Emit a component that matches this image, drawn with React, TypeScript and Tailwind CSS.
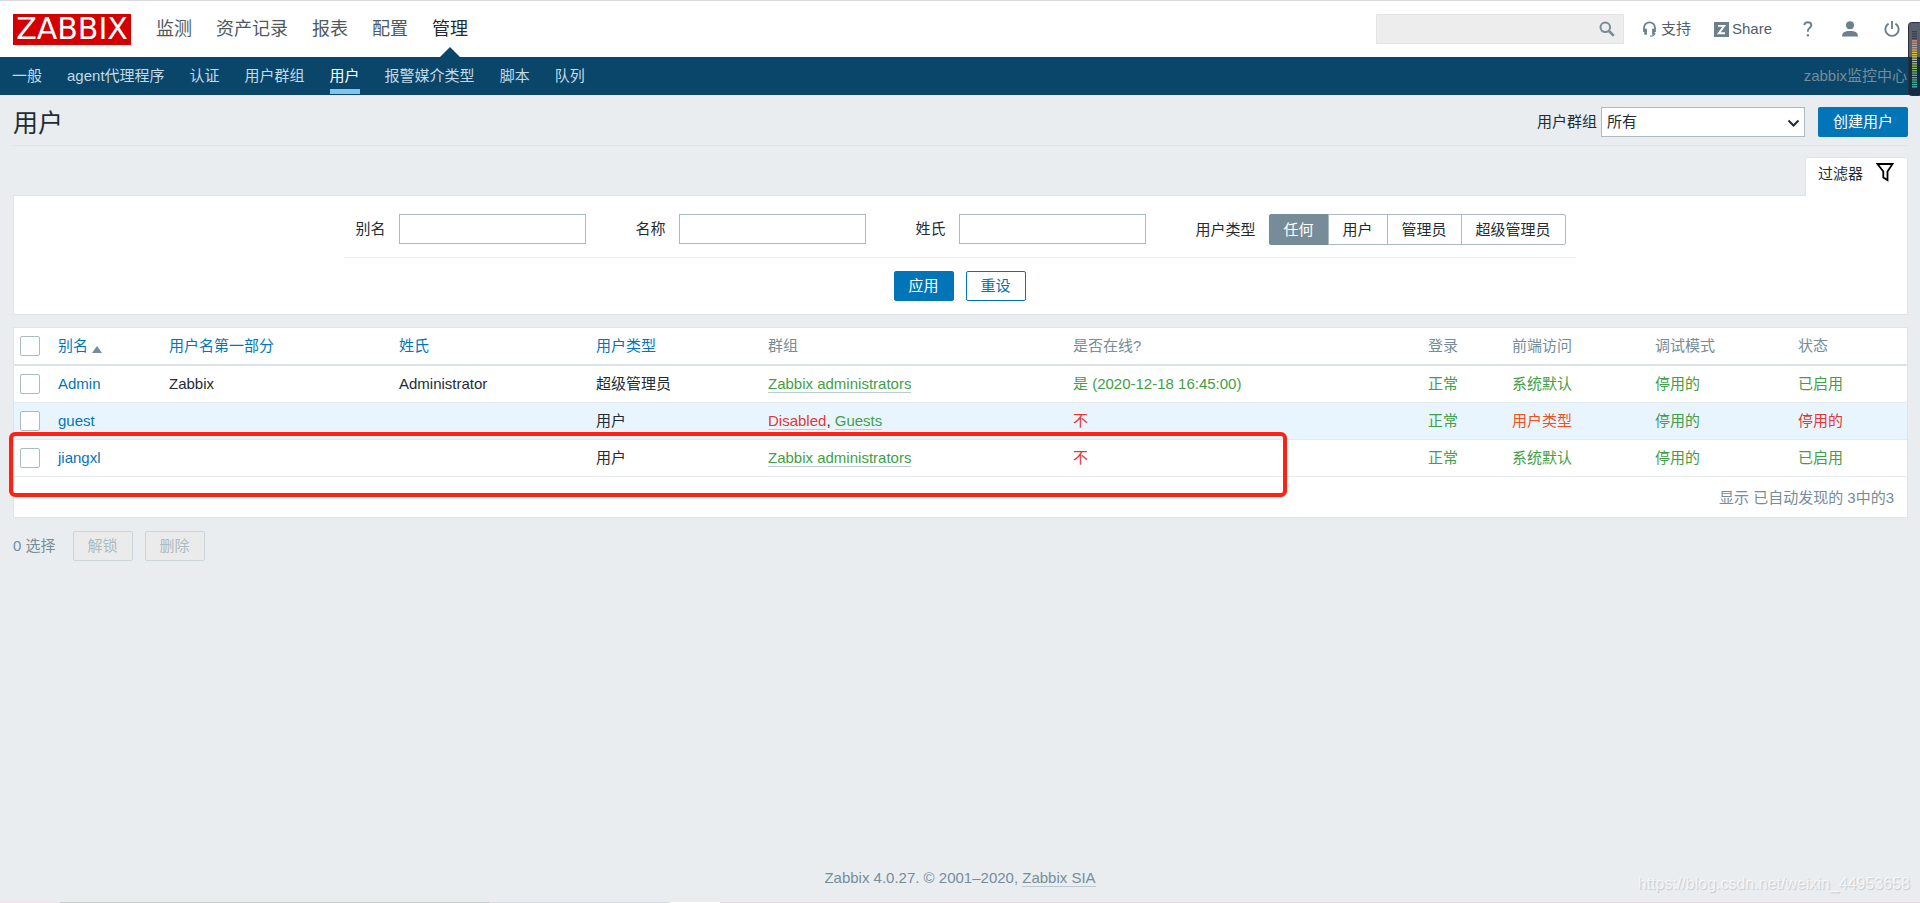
import React, { useState } from 'react';

const MENU = ['监测', '资产记录', '报表', '配置', '管理'];
const SUBMENU = ['一般', 'agent代理程序', '认证', '用户群组', '用户', '报警媒介类型', '脚本', '队列'];
const USER_TYPES = ['任何', '用户', '管理员', '超级管理员'];

const GREEN = 'text-[#429e47]';
const RED = 'text-[#e33734]';
const ORANGE = 'text-[#f24f1d]';

interface Group {
  name: string;
  color: string;
}

interface User {
  alias: string;
  name: string;
  surname: string;
  type: string;
  groups: Group[];
  online: string;
  onlineColor: string;
  access: string;
  accessColor: string;
  status: string;
  statusColor: string;
}

const USERS: User[] = [
  {
    alias: 'Admin',
    name: 'Zabbix',
    surname: 'Administrator',
    type: '超级管理员',
    groups: [{ name: 'Zabbix administrators', color: GREEN }],
    online: '是 (2020-12-18 16:45:00)',
    onlineColor: GREEN,
    access: '系统默认',
    accessColor: GREEN,
    status: '已启用',
    statusColor: GREEN,
  },
  {
    alias: 'guest',
    name: '',
    surname: '',
    type: '用户',
    groups: [
      { name: 'Disabled', color: RED },
      { name: 'Guests', color: GREEN },
    ],
    online: '不',
    onlineColor: RED,
    access: '用户类型',
    accessColor: ORANGE,
    status: '停用的',
    statusColor: RED,
  },
  {
    alias: 'jiangxl',
    name: '',
    surname: '',
    type: '用户',
    groups: [{ name: 'Zabbix administrators', color: GREEN }],
    online: '不',
    onlineColor: RED,
    access: '系统默认',
    accessColor: GREEN,
    status: '已启用',
    statusColor: GREEN,
  },
];

const METER_COLORS = [
  '#3a3f50', '#3a3f50', '#3a3f50', '#3a3f50', '#e0906a', '#e0906a', '#e39a5c', '#e2a552', '#e0b04c', '#dcba48',
  '#dcc546', '#dccf45', '#d8d846', '#c6d14a', '#b4ca50', '#a3c456', '#93bf5c', '#84bb64', '#76b86c', '#69b676',
  '#5db682', '#52b88f', '#47ba9c', '#3fbda8', '#3cc4b2',
];

const CHECKBOX =
  'block h-5 w-5 cursor-pointer appearance-none rounded-xs border border-[#acbbc2] bg-white checked:bg-[#0275b8]';

function TopBar() {
  return (
    <header className="flex h-[57px] items-center border-t border-[#d9d9de] bg-white pr-5 pl-[13px]">
      <a
        href="#"
        className="flex h-[31px] w-[118px] items-center justify-center bg-[#d40000] font-['DejaVu_Sans',sans-serif] text-[30px] leading-none text-white"
      >
        ZABBIX
      </a>
      <nav className="ml-[25px] flex h-full gap-6 text-[18px]">
        {MENU.map((item) => (
          <a
            key={item}
            href="#"
            className={
              item === '管理'
                ? 'relative flex items-center text-[#1f2c33]'
                : 'flex items-center text-[#4e5a61]'
            }
          >
            {item}
            {item === '管理' && (
              <svg className="absolute bottom-0 left-2" width="20" height="10" viewBox="0 0 20 10">
                <path d="M0 10 10 0l10 10z" fill="#0a466a" />
              </svg>
            )}
          </a>
        ))}
      </nav>

      <div className="ml-auto flex items-center text-[#50616a]">
        <form className="flex h-[30px] w-[248px] items-center border border-[#e2e4e6] bg-[#ededed]">
          <input type="text" aria-label="搜索" className="min-w-0 flex-1 px-2 outline-none" />
          <button type="button" aria-label="搜索" className="mr-2">
            <svg width="16" height="16" viewBox="0 0 16 16" fill="none" stroke="#768d99">
              <circle cx="6.3" cy="6.3" r="4.8" strokeWidth="2" />
              <path d="m10 10 4.8 4.8" strokeWidth="2.6" />
            </svg>
          </button>
        </form>
        <a href="#" className="ml-[18px] flex items-center gap-1">
          <svg width="15" height="16" viewBox="0 0 15 16" fill="none" stroke="#6b808b">
            <path d="M2 11V6.8a5.500 5.500 0 0 1 11 0V11" strokeWidth="1.8" />
            <path d="M3.600 7.800v6M11.400 7.800v6" strokeWidth="2.6" />
            <path d="M13 12c-.3 2-1.800 3.200-4.800 3.200" strokeWidth="1.2" />
          </svg>
          支持
        </a>
        <a href="#" className="ml-[23px] flex items-center gap-[3px]">
          <svg width="15" height="15" viewBox="0 0 15 15">
            <rect width="15" height="15" fill="#6b808b" />
            <path d="M4 3.900h6.200L4.800 11.200h6.200" fill="none" stroke="#fff" strokeWidth="1.900" />
          </svg>
          Share
        </a>
        <a href="#" aria-label="帮助" className="ml-[31px]">
          <svg width="10" height="16" viewBox="0 0 10 16" fill="none" stroke="#6b808b">
            <path d="M1.300 4.200C1.500 2.200 2.900 1.200 4.800 1.200c2 0 3.500 1.100 3.500 3 0 2.700-3.400 3-3.400 5.500v1.100" strokeWidth="1.900" />
            <path d="M4.900 13.200v2.200" strokeWidth="2.200" />
          </svg>
        </a>
        <a href="#" aria-label="用户资料" className="ml-7">
          <svg width="18" height="16" viewBox="0 0 18 16" fill="#6b808b">
            <circle cx="9" cy="4.200" r="4" />
            <path d="M1 15.500c0-4 2.500-5.600 8-5.600s8 1.600 8 5.600z" />
          </svg>
        </a>
        <a href="#" aria-label="登出" className="ml-[25px]">
          <svg width="16" height="16" viewBox="0 0 16 16" fill="none" stroke="#6b808b" strokeWidth="1.900">
            <path d="M8 0v8" />
            <path d="M4.600 2.600a6.600 6.600 0 1 0 6.800 0" />
          </svg>
        </a>
      </div>
    </header>
  );
}

function SubNav() {
  return (
    <nav className="flex h-[38px] gap-[25px] bg-[#0a466a] pr-[13px] pl-3 text-[#c3dbe8]">
      {SUBMENU.map((item) => (
        <a
          key={item}
          href="#"
          className={
            item === '用户'
              ? 'relative flex items-center text-white after:absolute after:inset-x-0 after:bottom-px after:h-[5px] after:bg-[#7fc4f2]'
              : 'flex items-center'
          }
        >
          {item}
        </a>
      ))}
      <span className="ml-auto flex items-center text-[#768d99]">zabbix监控中心</span>
    </nav>
  );
}

function LevelMeter() {
  return (
    <svg className="absolute top-[22px] right-0" width="12" height="74" viewBox="0 0 12 74">
      <rect x="0.500" y="0.500" width="14" height="73" rx="3" fill="#1b2136" fillOpacity="0.720" stroke="#2b2f3d" />
      {METER_COLORS.map((color, i) => (
        <rect key={i} x="4" y={9 + i * 2.3} width="5" height="1.300" fill={color} />
      ))}
    </svg>
  );
}

function Filter() {
  const [userType, setUserType] = useState('任何');

  return (
    <section>
      <div className="flex justify-end">
        <button
          type="button"
          className="relative -mb-px flex h-[39px] w-[103px] gap-[13px] rounded-t-xs border border-b-0 border-[#dfe4e7] bg-white pt-[5px] pl-3"
        >
          <span className="leading-[22px]">过滤器</span>
          <svg width="18" height="19" viewBox="0 0 18 19" fill="none" stroke="#000" strokeWidth="1.800">
            <path d="M1.500 1h15l-5 7.500v8.600l-4.200-2.600v-6z" />
          </svg>
        </button>
      </div>
      <form className="border border-[#dfe4e7] bg-white pt-[18px] pr-[18px] pb-[13px] pl-4">
        <div className="mx-auto max-w-[1232px]">
          <div className="flex flex-wrap gap-x-[50px] gap-y-3 border-b border-[#ebeef0] pb-3 pl-3">
            {['别名', '名称', '姓氏'].map((label) => (
              <label key={label} className="flex items-start gap-[13px] leading-[30px]">
                {label}
                <input type="text" className="h-[30px] w-[187px] border border-[#acbbc2] px-1 outline-none" />
              </label>
            ))}
            <fieldset className="flex items-center gap-[13px]">
              <span>用户类型</span>
              <div className="flex">
                {USER_TYPES.map((type) => (
                  <label
                    key={type}
                    className="-ml-px flex h-[31px] cursor-pointer items-center border border-[#acbbc2] px-[14px] first:ml-0 first:rounded-l-xs last:rounded-r-xs has-checked:border-[#768d99] has-checked:bg-[#768d99] has-checked:text-white"
                  >
                    <input
                      type="radio"
                      name="user-type"
                      className="sr-only"
                      checked={userType === type}
                      onChange={() => setUserType(type)}
                    />
                    {type}
                  </label>
                ))}
              </div>
            </fieldset>
          </div>
          <div className="flex justify-center gap-3 pt-[13px]">
            <button type="button" className="h-[30px] w-[60px] rounded-xs border border-[#0275b8] bg-[#0275b8] text-white">
              应用
            </button>
            <button type="button" className="h-[30px] w-[60px] rounded-xs border border-[#0275b8] bg-white text-[#0275b8]">
              重设
            </button>
          </div>
        </div>
      </form>
    </section>
  );
}

function UserTable() {
  return (
    <div className="relative mt-3 border border-[#dfe4e7] bg-white">
      <table className="w-full table-fixed border-collapse text-left">
        <thead>
          <tr className="h-[37px] border-b-2 border-[#dce2e5] text-[#768d99] [&>th]:px-[6px] [&>th]:py-0 [&>th]:font-normal">
            <th className="w-[38px]">
              <input type="checkbox" aria-label="全选" className={CHECKBOX} />
            </th>
            <th className="w-[111px]">
              <a href="#" className="flex items-end gap-1 text-[#0275b8]">
                别名
                <svg width="10" height="10" viewBox="0 0 10 10">
                  <path d="M0 8 5 1l5 7z" fill="#768d99" />
                </svg>
              </a>
            </th>
            <th className="w-[230px]">
              <a href="#" className="text-[#0275b8]">用户名第一部分</a>
            </th>
            <th className="w-[197px]">
              <a href="#" className="text-[#0275b8]">姓氏</a>
            </th>
            <th className="w-[172px]">
              <a href="#" className="text-[#0275b8]">用户类型</a>
            </th>
            <th className="w-[305px]">群组</th>
            <th className="w-[355px]">是否在线?</th>
            <th className="w-[84px]">登录</th>
            <th className="w-[143px]">前端访问</th>
            <th className="w-[143px]">调试模式</th>
            <th className="w-[115px]">状态</th>
          </tr>
        </thead>
        <tbody>
          {USERS.map((user) => (
            <tr
              key={user.alias}
              className={
                user.alias === 'guest'
                  ? 'h-[37px] border-b border-[#e6eaed] bg-[#e8f5ff] [&>td]:px-[6px]'
                  : 'h-[37px] border-b border-[#e6eaed] [&>td]:px-[6px]'
              }
            >
              <td>
                <input type="checkbox" aria-label={user.alias} className={CHECKBOX} />
              </td>
              <td>
                <a href="#" className="text-[#0275b8]">{user.alias}</a>
              </td>
              <td>{user.name}</td>
              <td>{user.surname}</td>
              <td>{user.type}</td>
              <td>
                {user.groups.map((group, i) => (
                  <React.Fragment key={group.name}>
                    {i > 0 && ', '}
                    <a href="#" className={`border-b border-[#bccad1] ${group.color}`}>{group.name}</a>
                  </React.Fragment>
                ))}
              </td>
              <td className={user.onlineColor}>{user.online}</td>
              <td className={GREEN}>正常</td>
              <td className={user.accessColor}>{user.access}</td>
              <td className={GREEN}>停用的</td>
              <td className={user.statusColor}>{user.status}</td>
            </tr>
          ))}
        </tbody>
      </table>
      <div className="flex h-10 items-center justify-end px-[13px] pt-0.5 text-[#768d99]">
        显示 已自动发现的 3中的3
      </div>

      {/* Highlight around the new user */}
      <div className="pointer-events-none absolute top-[104px] -left-[5px] h-[65px] w-[1278px] rounded-md border-4 border-[#ff2213]" />
    </div>
  );
}

export default function App() {
  return (
    <div className="relative flex min-h-screen flex-col bg-[#e9edf0] font-['Liberation_Sans','Noto_Sans_CJK_SC',sans-serif] text-[15px] leading-[18px] text-[#1f2c33]">
      <TopBar />
      <SubNav />
      <LevelMeter />

      <main className="pr-3 pl-[13px]">
        <div className="flex h-[51px] items-start border-b border-[#dfe4e7] pt-3">
          <h1 className="text-[25px] leading-8">用户</h1>
          <div className="ml-auto flex items-center">
            <label htmlFor="group" className="mr-1">用户群组</label>
            <div className="relative">
              <select
                id="group"
                className="block h-[30px] w-[204px] appearance-none border border-[#acbbc2] bg-white pr-7 pl-[5px]"
              >
                <option>所有</option>
              </select>
              <svg
                className="pointer-events-none absolute top-3 right-[5px]"
                width="13"
                height="9"
                viewBox="0 0 13 9"
                fill="none"
                stroke="#1f2c33"
                strokeWidth="2"
              >
                <path d="m1.500 1.500 5 5 5-5" />
              </svg>
            </div>
            <button type="button" className="ml-[13px] h-[30px] w-[90px] rounded-xs bg-[#0275b8] text-white">
              创建用户
            </button>
          </div>
        </div>

        <div className="pt-[11px]">
          <Filter />
        </div>
        <UserTable />

        <div className="mt-[13px] flex items-center text-[#768d99]">
          <span className="mr-[17px]">0 选择</span>
          <button type="button" disabled className="mr-3 h-[30px] w-[60px] rounded-xs border border-[#ccd5d9] bg-[#ebebeb] text-[#acbbc2]">
            解锁
          </button>
          <button type="button" disabled className="h-[30px] w-[60px] rounded-xs border border-[#ccd5d9] bg-[#ebebeb] text-[#acbbc2]">
            删除
          </button>
        </div>
      </main>

      <footer className="mt-auto pt-10 pb-[15px] text-center text-[#768d99]">
        Zabbix 4.0.27. © 2001–2020,{' '}
        <a href="#" className="border-b border-[#bccad1]">Zabbix SIA</a>
      </footer>
      <div className="flex h-px">
        <div className="w-[60px] bg-[#f3dfe8]" />
        <div className="w-[430px] bg-[#c8caca]" />
        <div className="w-[180px] bg-[#dcd9e2]" />
        <div className="w-[50px] bg-white" />
        <div className="flex-1 bg-[#e6d8e0]" />
      </div>
      <span className="absolute right-[10px] bottom-[10px] text-[16px] text-white/70 [text-shadow:1px_1px_1px_#c4c8cb]">
        https://blog.csdn.net/weixin_44953658
      </span>
    </div>
  );
}
